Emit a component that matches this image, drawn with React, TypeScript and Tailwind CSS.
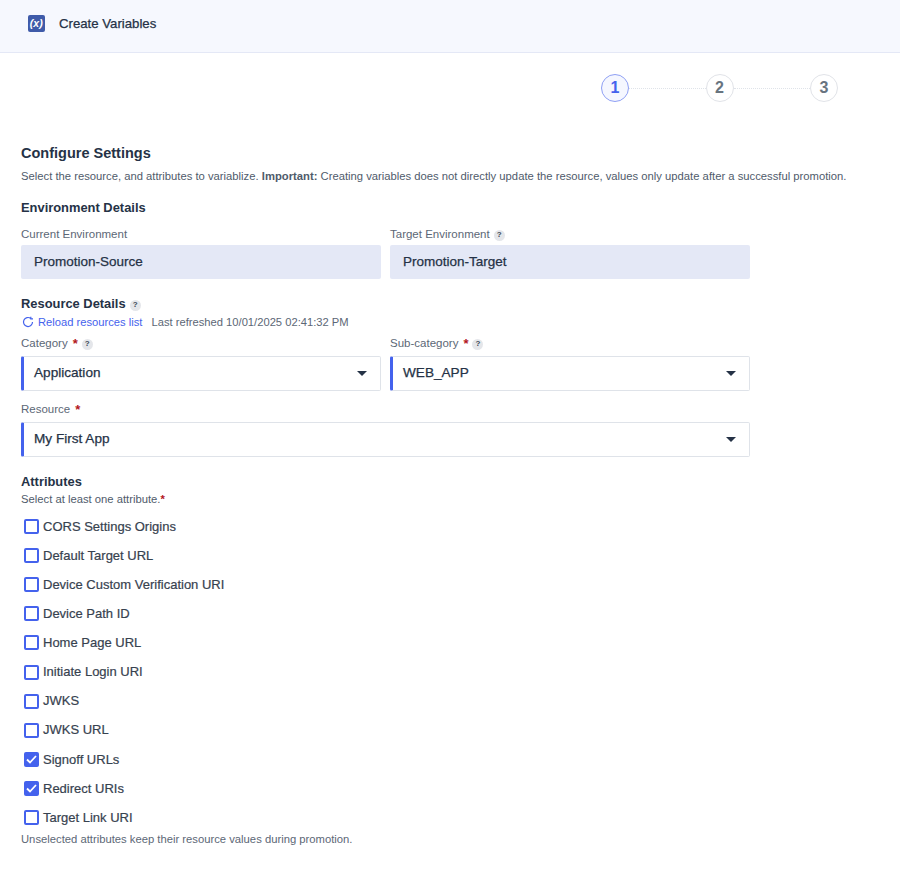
import { Fragment } from 'react';

const attributes = [
  { label: 'CORS Settings Origins', checked: false },
  { label: 'Default Target URL', checked: false },
  { label: 'Device Custom Verification URI', checked: false },
  { label: 'Device Path ID', checked: false },
  { label: 'Home Page URL', checked: false },
  { label: 'Initiate Login URI', checked: false },
  { label: 'JWKS', checked: false },
  { label: 'JWKS URL', checked: false },
  { label: 'Signoff URLs', checked: true },
  { label: 'Redirect URIs', checked: true },
  { label: 'Target Link URI', checked: false },
];

function Help() {
  return (
    <span className="mt-[2px] inline-flex h-[11px] w-[11px] items-center justify-center rounded-full bg-[#e4e6ea] text-[8px] font-bold leading-none text-[#3c4757]">
      ?
    </span>
  );
}

function Required() {
  return <span className="ml-[1px] text-[13px] font-bold leading-none text-[#b3161c]">*</span>;
}

function ReadOnlyField({ value }: { value: string }) {
  return (
    <div className="flex h-[34px] items-center rounded-[2px] bg-[#e4e8f6] pl-[13px] text-[13.5px] text-[#253246] [-webkit-text-stroke:0.25px_#253246]">
      {value}
    </div>
  );
}

function SelectField({ value }: { value: string }) {
  return (
    <div className="flex h-[35px] items-center justify-between rounded-[2px] border border-l-[3px] border-[#dfe3e9] border-l-[#4462ed] pl-[10px] pr-[13px] text-[13.6px] text-[#253246] [-webkit-text-stroke:0.25px_#253246]">
      <span>{value}</span>
      <svg width="10" height="5" viewBox="0 0 10 5" className="fill-[#253246]">
        <path d="M0 0h10L5 5z" />
      </svg>
    </div>
  );
}

function Checkbox({ checked }: { checked: boolean }) {
  return (
    <span
      className={
        checked
          ? 'flex h-[15px] w-[15px] items-center justify-center rounded-[2px] bg-[#4462ed]'
          : 'h-[15px] w-[15px] rounded-[2px] border-2 border-[#4462ed] bg-white'
      }
    >
      {checked && (
        <svg width="11" height="9" viewBox="0 0 11 9" fill="none" stroke="white" strokeWidth="1.8">
          <path d="M1 4.5 4 7.5 10 1" />
        </svg>
      )}
    </span>
  );
}

function Stepper() {
  return (
    <div className="flex h-[28px] items-center justify-end pr-[41px]">
      {[1, 2, 3].map((step) => (
        <Fragment key={step}>
          {step > 1 && <div className="h-0 w-[76.5px] border-t border-dotted border-[#dfe3e9]" />}
          <div
            className={
              step === 1
                ? 'flex h-[28px] w-[28px] items-center justify-center rounded-full border border-[#8fa0f4] bg-[#f5f7ff] text-[16px] font-bold text-[#4462ed]'
                : 'flex h-[28px] w-[28px] items-center justify-center rounded-full border border-[#e1e3e8] bg-white text-[16px] font-bold text-[#68747f]'
            }
          >
            {step}
          </div>
        </Fragment>
      ))}
    </div>
  );
}

export default function App() {
  return (
    <div className="min-h-[872px] bg-white font-['Liberation_Sans',Arial,sans-serif] text-[#253246]">
      <header className="flex h-[53px] items-center border-b border-[#e4e8f6] bg-[#f6f8fe] pb-[5px] pl-[28px]">
        <span className="flex h-[16.5px] w-[16.5px] items-center justify-center rounded-[2px] bg-[#3f5ba9] text-[10.5px] font-bold italic text-white">
          (x)
        </span>
        <h1 className="ml-[14.5px] text-[13.2px] [-webkit-text-stroke:0.25px_#253246]">Create Variables</h1>
      </header>

      <main className="px-[21px] pt-[21px]">
        <Stepper />

        <h2 className="mt-[41px] text-[14.5px] font-bold leading-[20px]">Configure Settings</h2>
        <p className="mt-[5px] whitespace-nowrap text-[11.25px] leading-[16px] text-[#4f5b6b]">
          Select the resource, and attributes to variablize. <strong>Important:</strong> Creating variables does not
          directly update the resource, values only update after a successful promotion.
        </p>

        <h3 className="mt-[15px] text-[12.9px] font-bold leading-[18px]">Environment Details</h3>
        <div className="mt-[9px] grid w-[729px] grid-cols-2 gap-x-[9px]">
          <div>
            <label className="block text-[11.5px] leading-[16px] text-[#5c6776]">Current Environment</label>
            <div className="mt-[3px]">
              <ReadOnlyField value="Promotion-Source" />
            </div>
          </div>
          <div>
            <label className="flex items-center gap-[4px] text-[11.5px] leading-[16px] text-[#5c6776]">
              Target Environment <Help />
            </label>
            <div className="mt-[3px]">
              <ReadOnlyField value="Promotion-Target" />
            </div>
          </div>
        </div>

        <h3 className="mt-[16px] flex items-center gap-[4px] text-[12.9px] font-bold leading-[18px]">
          Resource Details <Help />
        </h3>
        <div className="mt-[1px] flex items-center text-[11.2px] leading-[16px]">
          <svg width="12" height="12" viewBox="0 0 12 12" fill="none" stroke="#4462ed" strokeWidth="1.2" className="ml-[1px]">
            <path d="M10.5 6A4.5 4.5 0 1 1 8.8 2.5" />
            <path d="M8.8 0.8V2.9H11" />
          </svg>
          <span className="ml-[4px] text-[#4462ed]">Reload resources list</span>
          <span className="ml-[9px] text-[#5c6776]">Last refreshed 10/01/2025 02:41:32 PM</span>
        </div>

        <div className="mt-[5px] grid w-[729px] grid-cols-2 gap-x-[9px]">
          <div>
            <label className="flex items-center gap-[4px] text-[11.5px] leading-[16px] text-[#5c6776]">
              Category <Required /> <Help />
            </label>
            <div className="mt-[5px]">
              <SelectField value="Application" />
            </div>
          </div>
          <div>
            <label className="flex items-center gap-[4px] text-[11.5px] leading-[16px] text-[#5c6776]">
              Sub-category <Required /> <Help />
            </label>
            <div className="mt-[5px]">
              <SelectField value="WEB_APP" />
            </div>
          </div>
        </div>

        <div className="mt-[10px] w-[729px]">
          <label className="flex items-center gap-[4px] text-[11.5px] leading-[16px] text-[#5c6776]">
            Resource <Required />
          </label>
          <div className="mt-[5px]">
            <SelectField value="My First App" />
          </div>
        </div>

        <h3 className="mt-[16px] text-[12.9px] font-bold leading-[18px]">Attributes</h3>
        <p className="text-[11.25px] leading-[16px] text-[#4f5b6b]">
          Select at least one attribute.<span className="font-bold text-[#b3161c]">*</span>
        </p>
        <ul className="mt-[5px] flex flex-col">
          {attributes.map((attr) => (
            <li key={attr.label} className="flex h-[29.1px] items-center gap-[4px] pl-[3px] text-[13px] text-[#37424f] [-webkit-text-stroke:0.2px_#37424f]">
              <Checkbox checked={attr.checked} />
              {attr.label}
            </li>
          ))}
        </ul>
        <p className="mt-[-1px] text-[11.25px] leading-[16px] text-[#5c6776]">
          Unselected attributes keep their resource values during promotion.
        </p>
      </main>
    </div>
  );
}
